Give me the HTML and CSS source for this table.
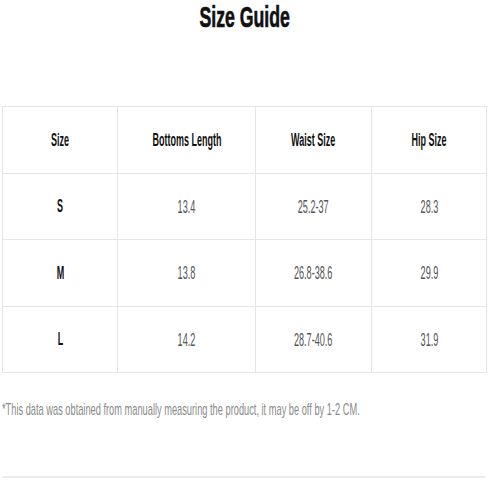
FILE: index.html
```html
<!DOCTYPE html>
<html lang="en">
<head>
<meta charset="utf-8">
<title>Size Guide</title>
<link rel="stylesheet" href="styles.css">
</head>
<body>
<div class="page">
  <h1 class="title"><span class="squeeze">Size Guide</span></h1>
  <div class="chart" role="table">
    <div class="cell head" role="columnheader"><span class="squeeze">Size</span></div>
    <div class="cell head" role="columnheader"><span class="squeeze">Bottoms Length</span></div>
    <div class="cell head" role="columnheader"><span class="squeeze">Waist Size</span></div>
    <div class="cell head" role="columnheader"><span class="squeeze">Hip Size</span></div>

    <div class="cell size" role="cell"><span class="squeeze">S</span></div>
    <div class="cell num" role="cell"><span class="squeeze">13.4</span></div>
    <div class="cell num" role="cell"><span class="squeeze">25.2-37</span></div>
    <div class="cell num" role="cell"><span class="squeeze">28.3</span></div>

    <div class="cell size" role="cell"><span class="squeeze">M</span></div>
    <div class="cell num" role="cell"><span class="squeeze">13.8</span></div>
    <div class="cell num" role="cell"><span class="squeeze">26.8-38.6</span></div>
    <div class="cell num" role="cell"><span class="squeeze">29.9</span></div>

    <div class="cell size" role="cell"><span class="squeeze">L</span></div>
    <div class="cell num" role="cell"><span class="squeeze">14.2</span></div>
    <div class="cell num" role="cell"><span class="squeeze">28.7-40.6</span></div>
    <div class="cell num" role="cell"><span class="squeeze">31.9</span></div>
  </div>
  <p class="note"><span class="squeeze-left">*This data was obtained from manually measuring the product, it may be off by 1-2 CM.</span></p>
  <div class="rule"></div>
</div>
</body>
</html>
```

FILE: styles.css
```css
html, body {
  margin: 0;
  padding: 0;
  background: #fff;
}

body {
  font-family: "Liberation Sans", Arial, sans-serif;
  color: #111;
}

.page {
  width: 488px;
  padding-left: 2px;
  box-sizing: border-box;
}

.squeeze {
  display: inline-block;
  white-space: nowrap;
  transform: scaleX(0.5);
  transform-origin: center center;
}

.squeeze-left {
  display: inline-block;
  white-space: nowrap;
  transform: scaleX(0.545);
  transform-origin: left center;
}

.title {
  margin: 0;
  font-size: 30px;
  line-height: 34px;
  font-weight: 700;
  text-align: center;
  color: #111;
}

.title .squeeze {
  transform: scaleX(0.59);
  -webkit-text-stroke: 0.7px #111;
}

.chart {
  margin-top: 72px;
  display: grid;
  grid-template-columns: 115px 138px 116px 115px;
  grid-template-rows: 67px 66px 67px 66px;
  border-top: 1px solid #e6e6e6;
  border-left: 1px solid #e6e6e6;
  width: 485px;
}

.cell {
  border-right: 1px solid #e6e6e6;
  border-bottom: 1px solid #e6e6e6;
  display: flex;
  align-items: center;
  justify-content: center;
  overflow: hidden;
}

.head {
  font-size: 18px;
  font-weight: 700;
  color: #111;
}

.size {
  font-size: 18px;
  font-weight: 700;
  color: #111;
}

.num {
  font-size: 19px;
  color: #555;
}

.num .squeeze {
  transform: scaleX(0.48);
}

.note {
  margin: 27px 0 0;
  width: 484px;
  overflow: hidden;
  font-size: 17px;
  line-height: 20px;
  color: #8a8a8a;
  white-space: nowrap;
}

.rule {
  margin-top: 56px;
  height: 2px;
  width: 483px;
  background: #ececec;
}
```
